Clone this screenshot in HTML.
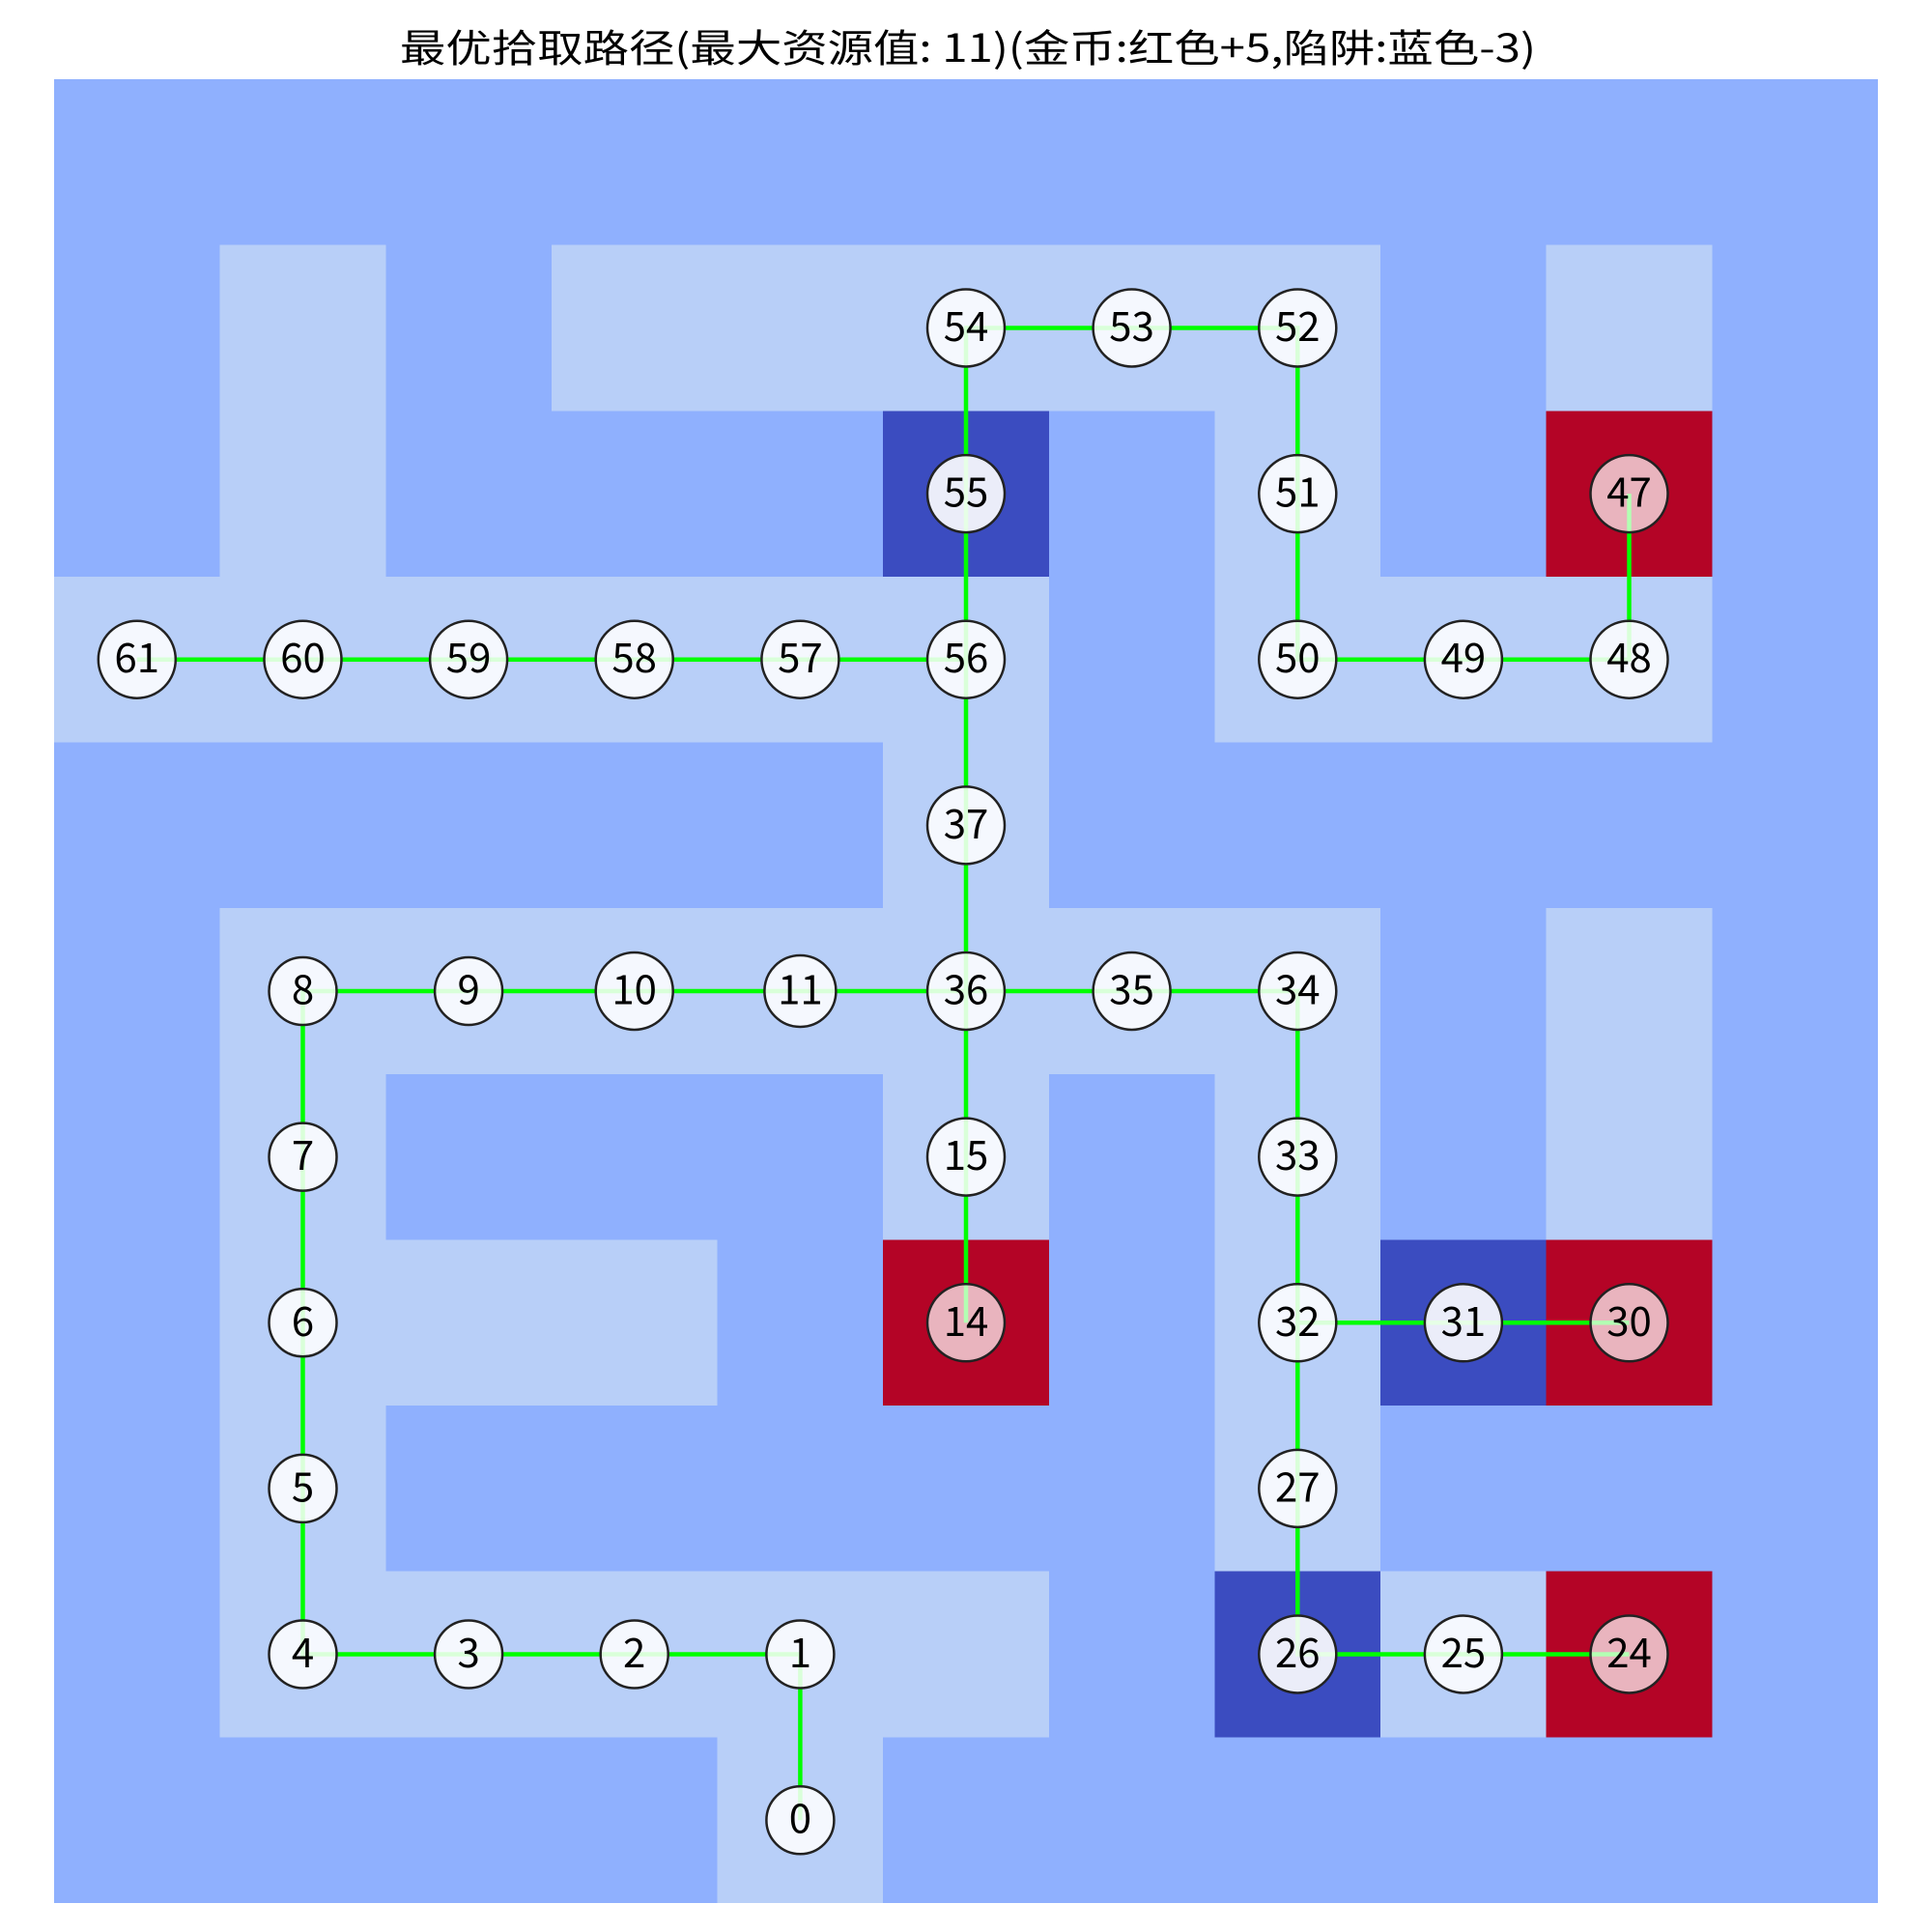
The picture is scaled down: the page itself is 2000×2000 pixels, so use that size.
<!DOCTYPE html>
<html><head><meta charset="utf-8"><style>
html,body{margin:0;padding:0;background:#fff;width:2000px;height:2000px;overflow:hidden}
svg{display:block}
text{font-family:"WenQuanYi Zen Hei","Noto Sans CJK SC",sans-serif}
</style></head><body>
<svg width="2000" height="2000" viewBox="0 0 2000 2000" xmlns="http://www.w3.org/2000/svg">
<rect width="2000" height="2000" fill="#fff"/>
<text x="414" y="64" font-size="40" fill="#000" textLength="1176" lengthAdjust="spacingAndGlyphs">最优拾取路径(最大资源值: 11)(金币:红色+5,陷阱:蓝色-3)</text>
<svg x="56" y="82" width="1888" height="1888" viewBox="0 0 11 11" preserveAspectRatio="none" shape-rendering="crispEdges">
<rect x="0" y="0" width="11" height="11" fill="#8fb0fe"/>
<g fill="#b8cff8">
<rect x="1" y="1" width="1" height="1"/><rect x="3" y="1" width="5" height="1"/><rect x="9" y="1" width="1" height="1"/>
<rect x="1" y="2" width="1" height="1"/><rect x="7" y="2" width="1" height="1"/>
<rect x="0" y="3" width="6" height="1"/><rect x="7" y="3" width="3" height="1"/>
<rect x="5" y="4" width="1" height="1"/>
<rect x="1" y="5" width="7" height="1"/><rect x="9" y="5" width="1" height="1"/>
<rect x="1" y="6" width="1" height="1"/><rect x="5" y="6" width="1" height="1"/><rect x="7" y="6" width="1" height="1"/><rect x="9" y="6" width="1" height="1"/>
<rect x="1" y="7" width="3" height="1"/><rect x="7" y="7" width="1" height="1"/>
<rect x="1" y="8" width="1" height="1"/><rect x="7" y="8" width="1" height="1"/>
<rect x="1" y="9" width="5" height="1"/><rect x="8" y="9" width="1" height="1"/>
<rect x="4" y="10" width="1" height="1"/>
</g>
<g fill="#3b4cc0"><rect x="5" y="2" width="1" height="1"/><rect x="8" y="7" width="1" height="1"/><rect x="7" y="9" width="1" height="1"/></g>
<g fill="#b40426"><rect x="9" y="2" width="1" height="1"/><rect x="5" y="7" width="1" height="1"/><rect x="9" y="7" width="1" height="1"/><rect x="9" y="9" width="1" height="1"/></g>
</svg>
<g stroke="#00ff00" stroke-width="4.5" fill="none">
<path d="M828.4 1884.2 V1712.5 H313.5 V1026 H1343.3 V1712.5 H1686.5"/>
<path d="M1343.3 1369.3 H1686.5"/>
<path d="M1000 1026 V1369.3"/>
<path d="M1000 1026 V339.5 H1343.3 V682.7 H1686.5 V511.1"/>
<path d="M1000 682.7 H141.8"/>
</g>
<g stroke="#222" stroke-width="2.5" fill="rgba(255,255,255,0.85)">
<circle cx="828.4" cy="1884.2" r="35"/>
<circle cx="828.4" cy="1712.5" r="35"/>
<circle cx="656.7" cy="1712.5" r="35"/>
<circle cx="485.1" cy="1712.5" r="35"/>
<circle cx="313.5" cy="1712.5" r="35"/>
<circle cx="313.5" cy="1540.9" r="35"/>
<circle cx="313.5" cy="1369.3" r="35"/>
<circle cx="313.5" cy="1197.6" r="35"/>
<circle cx="313.5" cy="1026" r="35"/>
<circle cx="485.1" cy="1026" r="35"/>
<circle cx="656.7" cy="1026" r="40"/>
<circle cx="828.4" cy="1026" r="37"/>
<circle cx="1000" cy="1026" r="40"/>
<circle cx="1171.6" cy="1026" r="40"/>
<circle cx="1343.3" cy="1026" r="40"/>
<circle cx="1000" cy="1197.6" r="40"/>
<circle cx="1343.3" cy="1197.6" r="40"/>
<circle cx="1343.3" cy="1369.3" r="40"/>
<circle cx="1343.3" cy="1540.9" r="40"/>
<circle cx="1514.9" cy="1712.5" r="40"/>
<circle cx="1000" cy="854.4" r="40"/>
<circle cx="1000" cy="682.7" r="40"/>
<circle cx="828.4" cy="682.7" r="40"/>
<circle cx="656.7" cy="682.7" r="40"/>
<circle cx="485.1" cy="682.7" r="40"/>
<circle cx="313.5" cy="682.7" r="40"/>
<circle cx="141.8" cy="682.7" r="40"/>
<circle cx="1000" cy="339.5" r="40"/>
<circle cx="1171.6" cy="339.5" r="40"/>
<circle cx="1343.3" cy="339.5" r="40"/>
<circle cx="1343.3" cy="511.1" r="40"/>
<circle cx="1343.3" cy="682.7" r="40"/>
<circle cx="1514.9" cy="682.7" r="40"/>
<circle cx="1686.5" cy="682.7" r="40"/>
</g>
<g stroke="#222" stroke-width="2.5" fill="rgba(255,255,255,0.9)">
<circle cx="1000" cy="511.1" r="40"/>
<circle cx="1514.9" cy="1369.3" r="40"/>
<circle cx="1343.3" cy="1712.5" r="40"/>
</g>
<g stroke="#222" stroke-width="2.5" fill="rgba(255,255,255,0.7)">
<circle cx="1000" cy="1369.3" r="40"/>
<circle cx="1686.5" cy="1369.3" r="40"/>
<circle cx="1686.5" cy="1712.5" r="40"/>
<circle cx="1686.5" cy="511.1" r="40"/>
</g>
<g fill="#000" font-size="42" text-anchor="middle" dominant-baseline="central" transform="translate(0,-4)">
<text x="828.4" y="1884.2">0</text>
<text x="828.4" y="1712.5">1</text>
<text x="656.7" y="1712.5">2</text>
<text x="485.1" y="1712.5">3</text>
<text x="313.5" y="1712.5">4</text>
<text x="313.5" y="1540.9">5</text>
<text x="313.5" y="1369.3">6</text>
<text x="313.5" y="1197.6">7</text>
<text x="313.5" y="1026">8</text>
<text x="485.1" y="1026">9</text>
<text x="656.7" y="1026">10</text>
<text x="828.4" y="1026">11</text>
<text x="1000" y="1026">36</text>
<text x="1171.6" y="1026">35</text>
<text x="1343.3" y="1026">34</text>
<text x="1000" y="1197.6">15</text>
<text x="1000" y="1369.3">14</text>
<text x="1343.3" y="1197.6">33</text>
<text x="1343.3" y="1369.3">32</text>
<text x="1514.9" y="1369.3">31</text>
<text x="1686.5" y="1369.3">30</text>
<text x="1343.3" y="1540.9">27</text>
<text x="1343.3" y="1712.5">26</text>
<text x="1514.9" y="1712.5">25</text>
<text x="1686.5" y="1712.5">24</text>
<text x="1000" y="854.4">37</text>
<text x="1000" y="682.7">56</text>
<text x="828.4" y="682.7">57</text>
<text x="656.7" y="682.7">58</text>
<text x="485.1" y="682.7">59</text>
<text x="313.5" y="682.7">60</text>
<text x="141.8" y="682.7">61</text>
<text x="1000" y="511.1">55</text>
<text x="1000" y="339.5">54</text>
<text x="1171.6" y="339.5">53</text>
<text x="1343.3" y="339.5">52</text>
<text x="1343.3" y="511.1">51</text>
<text x="1343.3" y="682.7">50</text>
<text x="1514.9" y="682.7">49</text>
<text x="1686.5" y="682.7">48</text>
<text x="1686.5" y="511.1">47</text>
</g>
</svg>
</body></html>
